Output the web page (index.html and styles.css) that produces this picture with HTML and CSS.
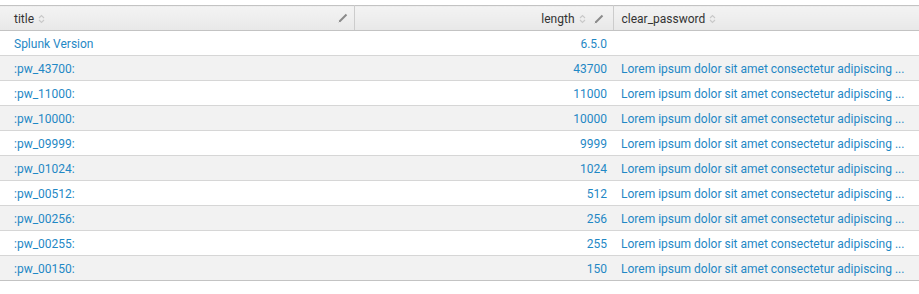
FILE: index.html
```html
<!DOCTYPE html>
<html>
<head>
<meta charset="utf-8">
<link rel="stylesheet" href="styles.css">
</head>
<body>
<div class="wrap">
<table class="grid">
  <colgroup>
    <col class="c-title">
    <col class="c-len">
    <col class="c-pw">
  </colgroup>
  <thead>
    <tr>
      <th class="h-left"><span class="lbl">title</span><span class="sort"><svg width="7" height="10" viewBox="0 0 7 10"><path d="M1 4 L3.5 1.5 L6 4" fill="none" stroke="#c9c9c9" stroke-width="1.1"/><path d="M1 6 L3.5 8.5 L6 6" fill="none" stroke="#c9c9c9" stroke-width="1.1"/></svg></span><span class="pen"><svg width="10" height="10" viewBox="0 0 10 10"><path d="M1.5 8.5 L8.5 1.5" stroke="#8a8a8a" stroke-width="2" stroke-linecap="butt"/><path d="M0.8 9.2 L2 8" stroke="#8a8a8a" stroke-width="1"/></svg></span></th>
      <th class="h-right"><span class="lbl">length</span><span class="sort"><svg width="7" height="10" viewBox="0 0 7 10"><path d="M1 4 L3.5 1.5 L6 4" fill="none" stroke="#c9c9c9" stroke-width="1.1"/><path d="M1 6 L3.5 8.5 L6 6" fill="none" stroke="#c9c9c9" stroke-width="1.1"/></svg></span><span class="pen2"><svg width="10" height="10" viewBox="0 0 10 10"><path d="M1.5 8.5 L8.5 1.5" stroke="#8a8a8a" stroke-width="2"/><path d="M0.8 9.2 L2 8" stroke="#8a8a8a" stroke-width="1"/></svg></span></th>
      <th class="h-left h-last"><span class="lbl">clear_password</span><span class="sort"><svg width="7" height="10" viewBox="0 0 7 10"><path d="M1 4 L3.5 1.5 L6 4" fill="none" stroke="#c9c9c9" stroke-width="1.1"/><path d="M1 6 L3.5 8.5 L6 6" fill="none" stroke="#c9c9c9" stroke-width="1.1"/></svg></span></th>
    </tr>
  </thead>
  <tbody>
    <tr><td>Splunk Version</td><td class="num">6.5.0</td><td></td></tr>
    <tr><td>:pw_43700:</td><td class="num">43700</td><td>Lorem ipsum dolor sit amet consectetur adipiscing ...</td></tr>
    <tr><td>:pw_11000:</td><td class="num">11000</td><td>Lorem ipsum dolor sit amet consectetur adipiscing ...</td></tr>
    <tr><td>:pw_10000:</td><td class="num">10000</td><td>Lorem ipsum dolor sit amet consectetur adipiscing ...</td></tr>
    <tr><td>:pw_09999:</td><td class="num">9999</td><td>Lorem ipsum dolor sit amet consectetur adipiscing ...</td></tr>
    <tr><td>:pw_01024:</td><td class="num">1024</td><td>Lorem ipsum dolor sit amet consectetur adipiscing ...</td></tr>
    <tr><td>:pw_00512:</td><td class="num">512</td><td>Lorem ipsum dolor sit amet consectetur adipiscing ...</td></tr>
    <tr><td>:pw_00256:</td><td class="num">256</td><td>Lorem ipsum dolor sit amet consectetur adipiscing ...</td></tr>
    <tr><td>:pw_00255:</td><td class="num">255</td><td>Lorem ipsum dolor sit amet consectetur adipiscing ...</td></tr>
    <tr><td>:pw_00150:</td><td class="num">150</td><td>Lorem ipsum dolor sit amet consectetur adipiscing ...</td></tr>
  </tbody>
</table>
</div>
</body>
</html>
```
FILE: styles.css
```css
html, body {
  margin: 0;
  padding: 0;
  background: #ffffff;
}
.wrap {
  padding-top: 5px;
}
.grid {
  width: 919px;
  border-collapse: collapse;
  table-layout: fixed;
  font-family: Roboto, "Liberation Sans", sans-serif;
  font-size: 12px;
}
.c-title { width: 354px; }
.c-len { width: 259px; }
.c-pw { width: 306px; }
.grid thead th {
  height: 23px;
  padding: 1px 0 0 14px;
  font-weight: normal;
  color: #333333;
  text-align: left;
  background: linear-gradient(#f3f3f3, #e8e8e8);
  border-top: 1px solid #c3c3c3;
  border-bottom: 1px solid #c3c3c3;
  border-left: 1px solid #cccccc;
  border-right: 1px solid #cccccc;
  white-space: nowrap;
}
.grid thead th:first-child { border-left: none; }
.grid thead th.h-last { border-right: none; padding-left: 8px; }
.grid thead th.h-right {
  text-align: right;
  padding: 1px 9px 0 0;
}
.sort {
  display: inline-block;
  margin-left: 4px;
  vertical-align: -1px;
}
.sort svg, .pen svg, .pen2 svg { display: block; }
.pen {
  float: right;
  margin-right: 6px;
  margin-top: 1px;
}
.pen2 {
  display: inline-block;
  margin-left: 8px;
  vertical-align: -1px;
}
.grid tbody td {
  height: 23px;
  padding: 1px 0 0 14px;
  color: #1f88c5;
  border-bottom: 1px solid #d6d6d6;
  white-space: nowrap;
  overflow: hidden;
}
.grid tbody td:nth-child(3) { padding-left: 8px; }
.grid tbody td.num {
  text-align: right;
  padding: 1px 6px 0 0;
}
.grid tbody tr:nth-child(even) td { background: #f2f2f2; }
.grid tbody tr:last-child td { border-bottom-color: #c3c3c3; }
```
